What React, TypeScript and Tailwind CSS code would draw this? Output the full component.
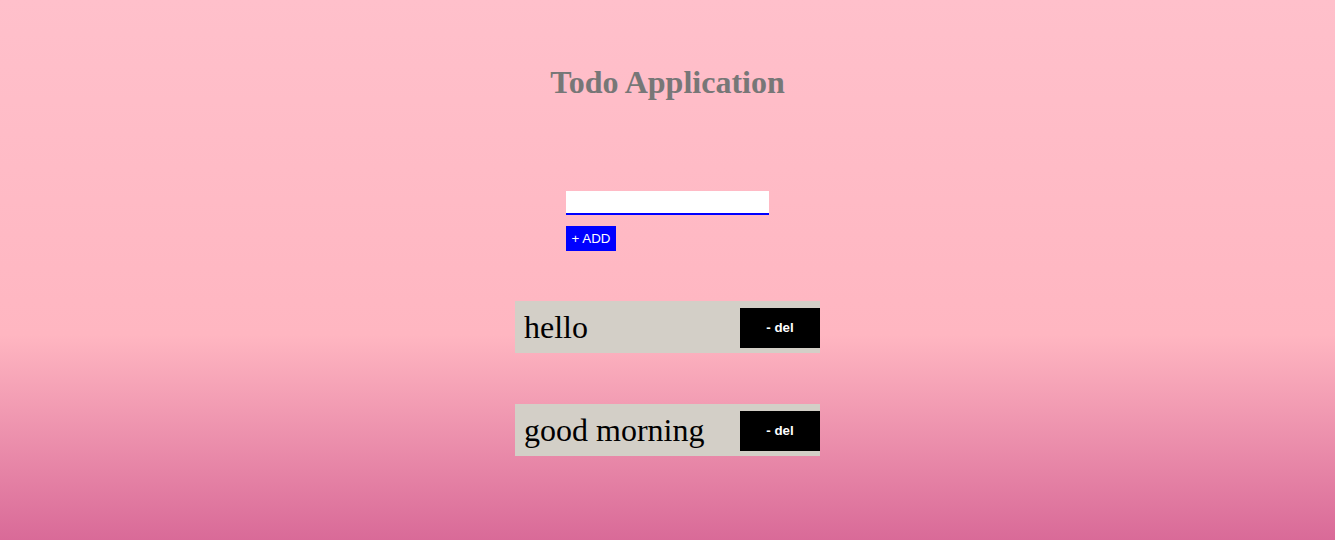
import { useState } from "react";

type Todo = { id: number; text: string };

function TodoItem({ todo, onDelete }: { todo: Todo; onDelete: (id: number) => void }) {
	return (
		<div className="flex h-[52px] w-[305px] items-center justify-between bg-[#d3cfc7] pl-[9px]">
			<span className="font-['Liberation_Serif',serif] text-[32px] leading-none text-black">
				{todo.text}
			</span>
			<button
				type="button"
				onClick={() => onDelete(todo.id)}
				className="mt-[2px] h-10 w-20 bg-black font-['Liberation_Sans',sans-serif] text-[13.33px] font-semibold text-white"
			>
				- del
			</button>
		</div>
	);
}

export default function App() {
	const [text, setText] = useState("");
	const [todos, setTodos] = useState<Todo[]>([
		{ id: 1, text: "hello" },
		{ id: 2, text: "good morning" },
	]);

	const addTodo = () => {
		if (!text.trim()) return;
		setTodos([...todos, { id: Date.now(), text }]);
		setText("");
	};

	return (
		<div className="min-h-[540px] bg-[linear-gradient(to_bottom,#ffc0cb_0%,#ffb6c1_62%,#d96a98_100%)]">
			<div className="flex flex-col items-center pt-[64px]">
				<h1 className="font-['Liberation_Serif',serif] text-[32px] font-bold leading-[37px] text-[#777777]">
					Todo Application
				</h1>

				<div className="mt-[90px] flex w-[203px] flex-col items-start">
					<input
						value={text}
						onChange={(e) => setText(e.target.value)}
						className="h-6 w-[203px] border-b-2 border-[#0000ff] bg-white px-1 text-sm outline-none"
					/>
					<button
						type="button"
						onClick={addTodo}
						className="mt-[11px] h-[25px] w-[50px] bg-[#0000ff] font-['Liberation_Sans',sans-serif] text-[13.33px] text-white"
					>
						+ ADD
					</button>
				</div>

				<div className="mt-[50px] flex flex-col gap-[51px]">
					{todos.map((todo) => (
						<TodoItem
							key={todo.id}
							todo={todo}
							onDelete={(id) => setTodos(todos.filter((t) => t.id !== id))}
						/>
					))}
				</div>
			</div>
		</div>
	);
}
